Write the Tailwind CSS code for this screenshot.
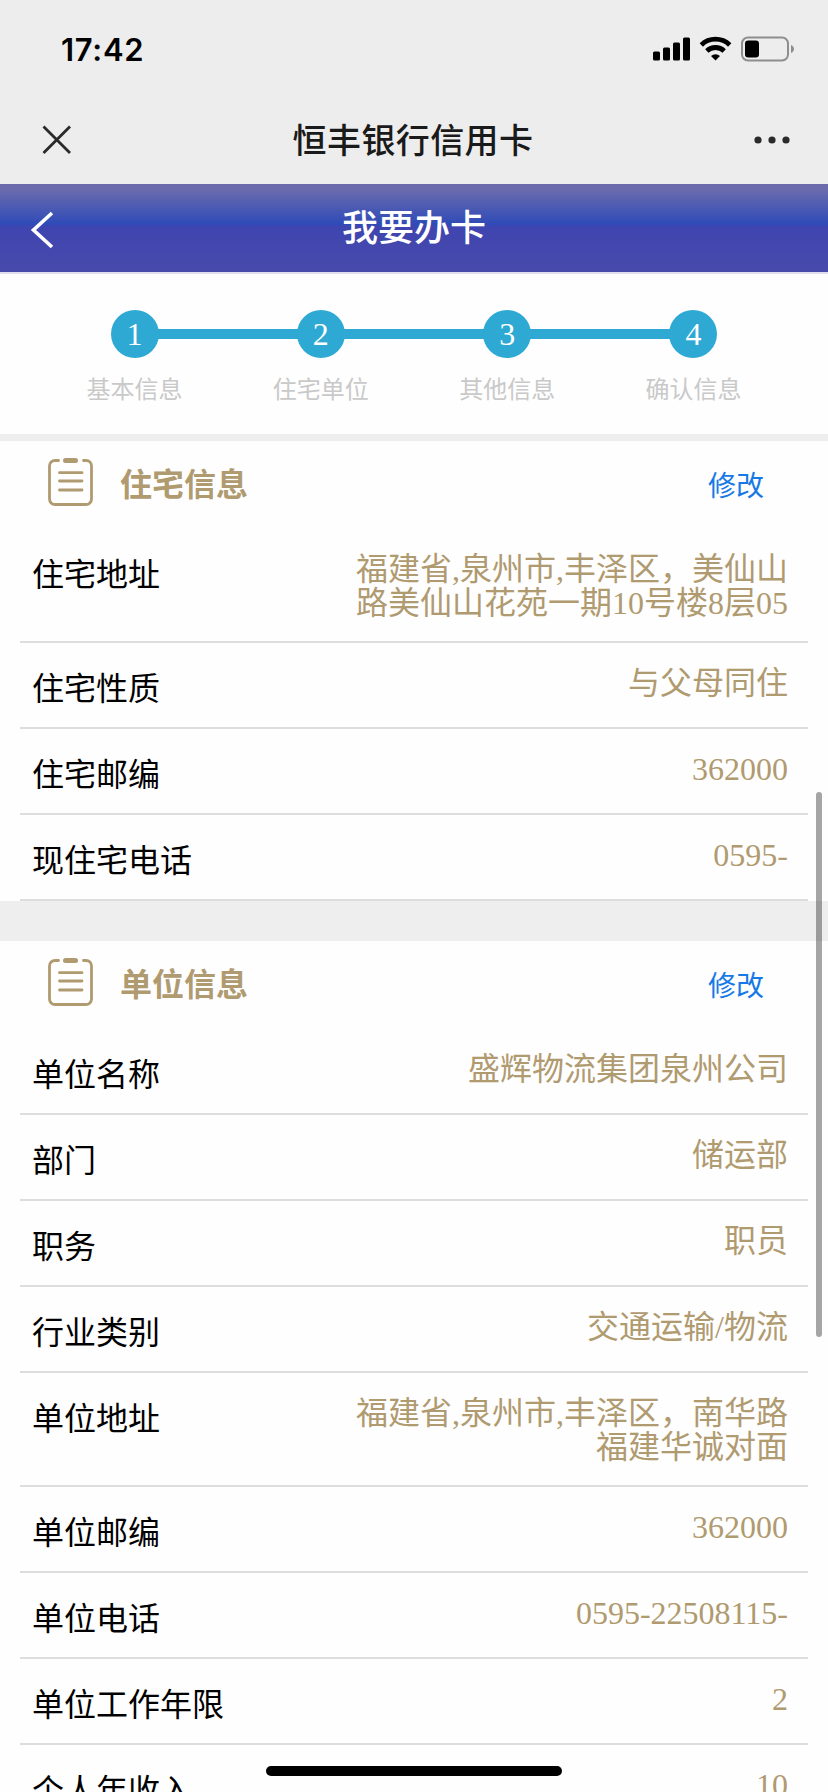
<!DOCTYPE html>
<html lang="zh-CN">
<head>
<meta charset="utf-8">
<title>恒丰银行信用卡</title>
<script src="https://cdn.jsdelivr.net/npm/@tailwindcss/browser@4"></script>
</head>
<body class="bg-[#fefefe]">
<div class="relative h-[1792px] w-[828px] overflow-hidden bg-[#fefefe] font-['Liberation_Serif','Noto_Sans_CJK_SC',serif] text-[32px] leading-[34px] text-black">

  <header class="h-[184px] bg-[#ededed] font-['Inter','Noto_Sans_CJK_SC',sans-serif]">
    <div class="flex h-[96px] items-center justify-between pr-[33px] pl-[61px]">
      <span class="pt-[4px] text-[31px] font-semibold tracking-[0.7px]">17:42</span>
      <svg class="mt-[3px] h-[28px] w-[142px]" viewBox="0 0 142 28">
        <g transform="translate(0 0.5)">
          <rect x="0" y="15" width="7" height="9" rx="1.5"/>
          <rect x="10" y="11" width="7" height="13" rx="1.5"/>
          <rect x="20" y="6" width="7" height="18" rx="1.5"/>
          <rect x="30" y="1" width="7" height="23" rx="1.5"/>
          <g fill="none" stroke="#000" stroke-width="4.8">
            <path d="M48.300 8.400a20.600 20.600 0 0 1 28.400 0"/>
            <path d="M53.800 14.500a12.600 12.600 0 0 1 17.400 0"/>
          </g>
          <path d="M58 19.600a6.600 6.600 0 0 1 9 0L62.500 24z"/>
          <rect x="89" y="1" width="46" height="23" rx="6" fill="none" stroke="#8e8e8e" stroke-width="2"/>
          <rect x="92" y="4" width="14" height="17" rx="3.2"/>
          <path d="M138 8.500c4 1.500 4 6.500 0 8z" fill="#8e8e8e"/>
        </g>
      </svg>
    </div>
    <div class="flex h-[88px] items-center justify-between pr-[37px] pl-[40px]">
      <svg class="h-[34px] w-[40px]" viewBox="0 0 40 34"><path d="M3.500 3.500l26.500 26.500M30 3.500L3.500 30" fill="none" stroke="#2a2a2a" stroke-width="2.800"/></svg>
      <h1 class="mt-[2px] mr-[5px] text-[34px] font-medium tracking-[0.4px] text-[#1a1a1a]">恒丰银行信用卡</h1>
      <svg class="h-[8px] w-[40px]" viewBox="0 0 40 8"><g fill="#2a2a2a"><circle cx="7" cy="4" r="3.600"/><circle cx="21" cy="4" r="3.600"/><circle cx="35" cy="4" r="3.600"/></g></svg>
    </div>
  </header>

  <nav class="flex h-[90px] items-center justify-between border-b-2 border-[#dfdff0] bg-[linear-gradient(to_bottom,#6c6aab_0px,#6a6bad_6px,#2f4bb8_40px,#3f45b0_43px,#484aab_88px)] bg-origin-border px-[30px] font-['Noto_Sans_CJK_SC',sans-serif]">
    <svg class="mt-[4px] h-[38px] w-[26px]" viewBox="0 0 26 38"><path d="M22 2L3.500 19 22 36" fill="none" stroke="#fff" stroke-width="3.600"/></svg>
    <h2 class="-mt-[7px] text-[36px] font-medium text-white">我要办卡</h2>
    <span class="w-[26px]"></span>
  </nav>

  <section class="h-[160px] pt-[36px]">
    <ol class="flex justify-center">
      <li class="flex w-[186.300px] flex-col items-center">
        <div class="flex w-full items-center"><i class="-mr-[3px] h-[10px] flex-1"></i><b class="flex h-[48px] w-[48px] items-center justify-center rounded-full bg-[#2ea9d4] pb-[1px] font-normal text-white">1</b><i class="-ml-[3px] h-[10px] flex-1 bg-[#2ea9d4]"></i></div>
        <span class="mt-[15px] text-[24px] text-[#c9c9c9]">基本信息</span>
      </li>
      <li class="flex w-[186.300px] flex-col items-center">
        <div class="flex w-full items-center"><i class="-mr-[3px] h-[10px] flex-1 bg-[#2ea9d4]"></i><b class="flex h-[48px] w-[48px] items-center justify-center rounded-full bg-[#2ea9d4] pb-[1px] font-normal text-white">2</b><i class="-ml-[3px] h-[10px] flex-1 bg-[#2ea9d4]"></i></div>
        <span class="mt-[15px] text-[24px] text-[#c9c9c9]">住宅单位</span>
      </li>
      <li class="flex w-[186.300px] flex-col items-center">
        <div class="flex w-full items-center"><i class="-mr-[3px] h-[10px] flex-1 bg-[#2ea9d4]"></i><b class="flex h-[48px] w-[48px] items-center justify-center rounded-full bg-[#2ea9d4] pb-[1px] font-normal text-white">3</b><i class="-ml-[3px] h-[10px] flex-1 bg-[#2ea9d4]"></i></div>
        <span class="mt-[15px] text-[24px] text-[#c9c9c9]">其他信息</span>
      </li>
      <li class="flex w-[186.300px] flex-col items-center">
        <div class="flex w-full items-center"><i class="-mr-[3px] h-[10px] flex-1 bg-[#2ea9d4]"></i><b class="flex h-[48px] w-[48px] items-center justify-center rounded-full bg-[#2ea9d4] pb-[1px] font-normal text-white">4</b><i class="-ml-[3px] h-[10px] flex-1"></i></div>
        <span class="mt-[15px] text-[24px] text-[#c9c9c9]">确认信息</span>
      </li>
    </ol>
  </section>
  <div class="h-[7px] bg-[#eee]"></div>

  <section>
    <div class="flex h-[88px] items-start pr-[64px] pl-[48px] pt-[17px]">
      <svg class="h-[48px] w-[45px]" viewBox="0 0 45 48" fill="none" stroke="#b09a70" stroke-linecap="round">
        <path d="M10.500 2.500H7A5.500 5.500 0 0 0 1.500 8v33A5.500 5.500 0 0 0 7 46.500h31a5.500 5.500 0 0 0 5.500-5.500V8A5.500 5.500 0 0 0 38 2.500h-2.500" stroke-width="2.800"/>
        <path d="M17.500 2.500h10" stroke-width="5"/>
        <path d="M11.500 14.700h22.500M11.500 23h22.500M11.500 32h22.500" stroke-width="2.800"/>
      </svg>
      <h3 class="mt-[10px] ml-[27px] flex-1 font-bold text-[#b09a70]">住宅信息</h3>
      <a class="mt-[12px] text-[28px] text-[#1679e6]">修改</a>
    </div>
    <dl class="mx-[20px]">
      <div class="flex h-[114px] justify-between border-b-2 border-[#ddd] pr-[20px] pl-[12px]"><dt class="pt-[29px]">住宅地址</dt><dd class="pt-[23px] text-right text-[#b09a70]">福建省,泉州市,丰泽区，美仙山<br>路美仙山花苑一期10号楼8层05</dd></div>
      <div class="flex h-[86px] justify-between border-b-2 border-[#ddd] pr-[20px] pl-[12px]"><dt class="pt-[29px]">住宅性质</dt><dd class="pt-[23px] text-[#b09a70]">与父母同住</dd></div>
      <div class="flex h-[86px] justify-between border-b-2 border-[#ddd] pr-[20px] pl-[12px]"><dt class="pt-[29px]">住宅邮编</dt><dd class="pt-[23px] text-[#b09a70]">362000</dd></div>
      <div class="flex h-[86px] justify-between border-b-2 border-[#ddd] pr-[20px] pl-[12px]"><dt class="pt-[29px]">现住宅电话</dt><dd class="pt-[23px] text-[#b09a70]">0595-</dd></div>
    </dl>
  </section>
  <div class="h-[40px] bg-[#eee]"></div>

  <section>
    <div class="flex h-[88px] items-start pr-[64px] pl-[48px] pt-[17px]">
      <svg class="h-[48px] w-[45px]" viewBox="0 0 45 48" fill="none" stroke="#b09a70" stroke-linecap="round">
        <path d="M10.500 2.500H7A5.500 5.500 0 0 0 1.500 8v33A5.500 5.500 0 0 0 7 46.500h31a5.500 5.500 0 0 0 5.500-5.500V8A5.500 5.500 0 0 0 38 2.500h-2.500" stroke-width="2.800"/>
        <path d="M17.500 2.500h10" stroke-width="5"/>
        <path d="M11.500 14.700h22.500M11.500 23h22.500M11.500 32h22.500" stroke-width="2.800"/>
      </svg>
      <h3 class="mt-[10px] ml-[27px] flex-1 font-bold text-[#b09a70]">单位信息</h3>
      <a class="mt-[12px] text-[28px] text-[#1679e6]">修改</a>
    </div>
    <dl class="mx-[20px]">
      <div class="flex h-[86px] justify-between border-b-2 border-[#ddd] pr-[20px] pl-[12px]"><dt class="pt-[29px]">单位名称</dt><dd class="pt-[23px] text-[#b09a70]">盛辉物流集团泉州公司</dd></div>
      <div class="flex h-[86px] justify-between border-b-2 border-[#ddd] pr-[20px] pl-[12px]"><dt class="pt-[29px]">部门</dt><dd class="pt-[23px] text-[#b09a70]">储运部</dd></div>
      <div class="flex h-[86px] justify-between border-b-2 border-[#ddd] pr-[20px] pl-[12px]"><dt class="pt-[29px]">职务</dt><dd class="pt-[23px] text-[#b09a70]">职员</dd></div>
      <div class="flex h-[86px] justify-between border-b-2 border-[#ddd] pr-[20px] pl-[12px]"><dt class="pt-[29px]">行业类别</dt><dd class="pt-[23px] text-[#b09a70]">交通运输/物流</dd></div>
      <div class="flex h-[114px] justify-between border-b-2 border-[#ddd] pr-[20px] pl-[12px]"><dt class="pt-[29px]">单位地址</dt><dd class="pt-[23px] text-right text-[#b09a70]">福建省,泉州市,丰泽区，南华路<br>福建华诚对面</dd></div>
      <div class="flex h-[86px] justify-between border-b-2 border-[#ddd] pr-[20px] pl-[12px]"><dt class="pt-[29px]">单位邮编</dt><dd class="pt-[23px] text-[#b09a70]">362000</dd></div>
      <div class="flex h-[86px] justify-between border-b-2 border-[#ddd] pr-[20px] pl-[12px]"><dt class="pt-[29px]">单位电话</dt><dd class="pt-[23px] text-[#b09a70]">0595-22508115-</dd></div>
      <div class="flex h-[86px] justify-between border-b-2 border-[#ddd] pr-[20px] pl-[12px]"><dt class="pt-[29px]">单位工作年限</dt><dd class="pt-[23px] text-[#b09a70]">2</dd></div>
      <div class="flex h-[86px] justify-between border-b-2 border-[#ddd] pr-[20px] pl-[12px]"><dt class="pt-[29px]">个人年收入</dt><dd class="pt-[23px] text-[#b09a70]">10</dd></div>
    </dl>
  </section>

  <!-- scroll thumb and home indicator float above the page -->
  <div class="absolute top-[792px] right-[6px] h-[545px] w-[6px] rounded-full bg-black/35"></div>
  <div class="absolute top-[1766px] left-[266px] h-[10px] w-[296px] rounded-full bg-black"></div>
</div>
</body>
</html>
